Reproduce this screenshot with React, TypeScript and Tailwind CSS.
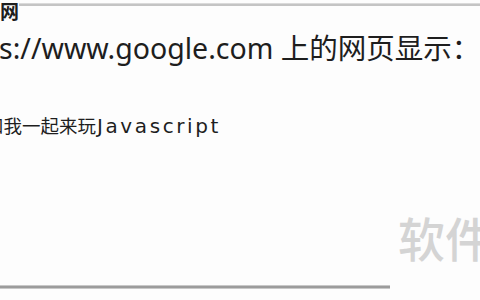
export default function App() {
  return (
    <div className="relative w-[480px] h-[300px] bg-[#fdfdfd] overflow-hidden flex flex-col text-[#1e1e1e] font-['Noto_Sans','Noto_Sans_CJK_SC',sans-serif]">
      <div className="flex items-start h-[22px]">
        <span className="font-bold text-[19px] leading-none mt-[1px] font-['Noto_Sans_CJK_SC',sans-serif]">网</span>
        <div className="flex-1 mt-[3px] h-[3px] bg-[#c4c4c4] border-t border-[#dadada]" />
      </div>
      <div className="mt-[9px] whitespace-nowrap text-[28.5px] leading-[34px] -ml-[1px]">
        s://www.google.com 上的网页显示：
      </div>
      <div className="mt-[47px] whitespace-nowrap text-[18.5px] leading-[28px] -ml-[15px] flex items-baseline">
        <span>和我一起来玩</span>
        <span className="text-[20px] tracking-[2.6px] ml-[1px] font-['DejaVu_Sans',sans-serif]">Javascript</span>
      </div>
      <div className="mt-auto mb-[11px] w-[390px] h-[4px] bg-[#9c9c9c] border-y border-[#c8c8c8]" />
      <div className="absolute left-[398px] top-[213px] text-[47px] leading-none text-[#d4d4d4] whitespace-nowrap font-medium font-['Noto_Sans_CJK_SC',sans-serif]">
        软件
      </div>
    </div>
  );
}
